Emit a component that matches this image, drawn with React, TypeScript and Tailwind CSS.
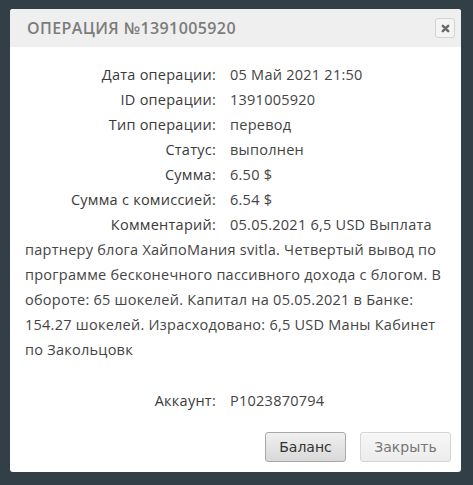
import React from "react";

const rows: [string, string][] = [
  ["Дата операции:", "05 Май 2021 21:50"],
  ["ID операции:", "1391005920"],
  ["Тип операции:", "перевод"],
  ["Статус:", "выполнен"],
  ["Сумма:", "6.50 $"],
  ["Сумма с комиссией:", "6.54 $"],
];

const comment =
  "05.05.2021 6,5 USD Выплата партнеру блога ХайпоМания svitla. Четвертый вывод по программе бесконечного пассивного дохода с блогом. В обороте: 65 шокелей. Капитал на 05.05.2021 в Банке: 154.27 шокелей. Израсходовано: 6,5 USD Маны Кабинет по Закольцовк";

function Row({ label, children }: { label: string; children: React.ReactNode }) {
  return (
    <div className="leading-[25px]">
      <span className="inline-block w-[191px] text-right text-[#3a3a3a]">{label}</span>
      <span className="ml-[14px] text-[#444]">{children}</span>
    </div>
  );
}

export default function App() {
  return (
    <div className="w-[473px] h-[485px] bg-[#333f47] pt-[9px] pl-[10px] font-['Open_Sans',sans-serif]">
      <div className="w-[451px] h-[463px] bg-white rounded-[3px] overflow-hidden flex flex-col">
        <div className="h-[38px] bg-[#efefef] flex items-center justify-between pl-[17px] pr-[6px]">
          <span className="text-[16px] font-semibold tracking-[0.4px] text-[#7c7c7c]">
            ОПЕРАЦИЯ №1391005920
          </span>
          <button className="w-[20px] h-[20px] rounded-[3px] border border-[#d4d4d4] bg-[#f4f4f4] flex items-center justify-center">
            <svg width="9" height="9" viewBox="0 0 10 10">
              <path d="M2 2 L8 8 M8 2 L2 8" stroke="#6a6a6a" strokeWidth="2.8" strokeLinecap="round" />
            </svg>
          </button>
        </div>
        <div className="pt-[15px] pl-[15px] pr-[14px] text-[14.5px] tracking-[0.25px]">
          {rows.map(([l, v]) => (
            <Row key={l} label={l}>
              {v}
            </Row>
          ))}
          <Row label="Комментарий:">{comment}</Row>
          <div className="h-[26px]" />
          <Row label="Аккаунт:">P1023870794</Row>
        </div>
        <div className="mt-auto pb-[10px] pr-[10px] flex justify-end gap-[14px] font-['DejaVu_Sans',sans-serif] text-[14px]">
          <button className="w-[81px] h-[30px] rounded-[3px] border border-[#a9a9a9] bg-gradient-to-b from-[#f0f0f0] to-[#d9d9d9] text-[#333]">
            Баланс
          </button>
          <button className="w-[91px] h-[30px] rounded-[3px] border border-[#d6d6d6] bg-gradient-to-b from-[#f7f7f7] to-[#ececec] text-[#777]">
            Закрыть
          </button>
        </div>
      </div>
    </div>
  );
}
